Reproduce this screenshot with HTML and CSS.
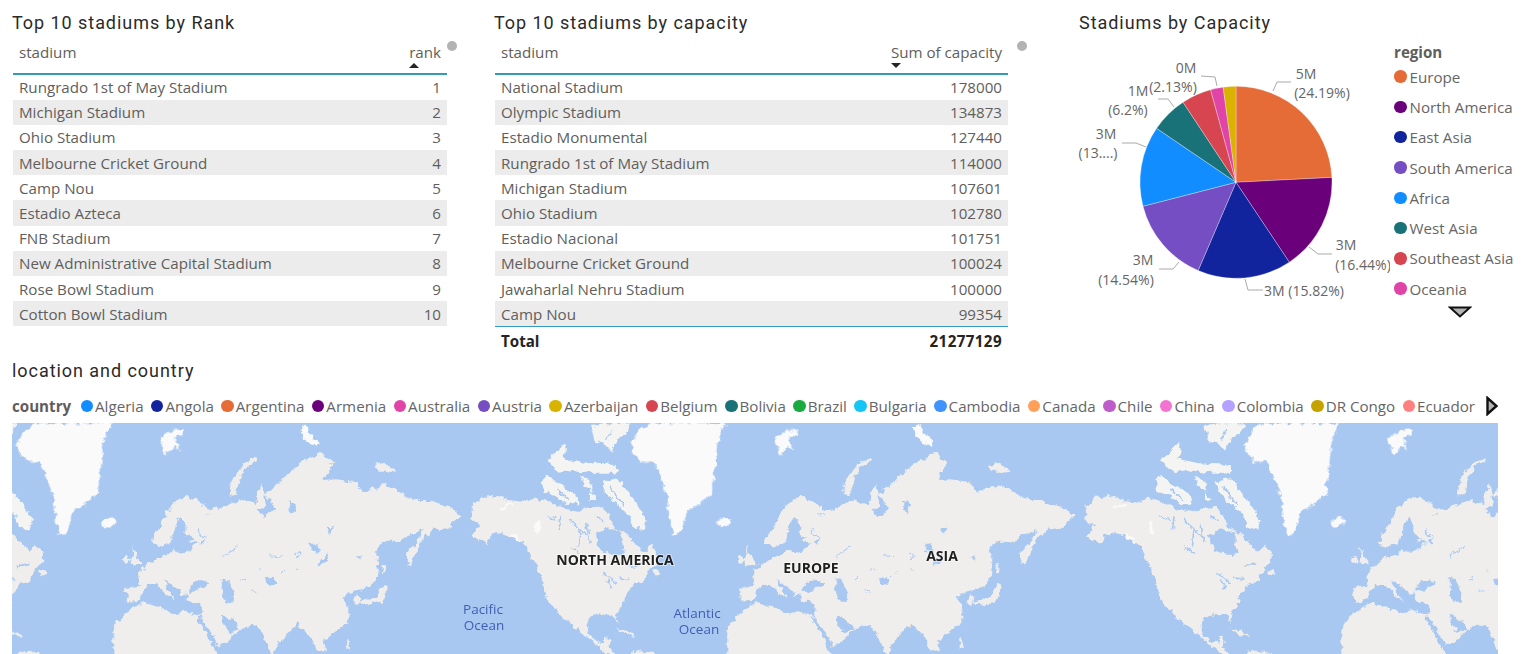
FILE: index.html
```html
<!DOCTYPE html>
<html lang="en">
<head>
<meta charset="utf-8">
<title>Stadiums report</title>
<link rel="stylesheet" href="styles.css">
</head>
<body>
<main class="report">
  <section class="top">
    <div class="visual rank-visual">
      <h2 class="title">Top 10 stadiums by Rank</h2>
      <div class="table-wrap">
        <div class="table rank-table">
          <div class="head"><span>stadium</span><span class="sort sort-up">rank</span></div>
          <div class="row"><span>Rungrado 1st of May Stadium</span><span>1</span></div>
          <div class="row"><span>Michigan Stadium</span><span>2</span></div>
          <div class="row"><span>Ohio Stadium</span><span>3</span></div>
          <div class="row"><span>Melbourne Cricket Ground</span><span>4</span></div>
          <div class="row"><span>Camp Nou</span><span>5</span></div>
          <div class="row"><span>Estadio Azteca</span><span>6</span></div>
          <div class="row"><span>FNB Stadium</span><span>7</span></div>
          <div class="row"><span>New Administrative Capital Stadium</span><span>8</span></div>
          <div class="row"><span>Rose Bowl Stadium</span><span>9</span></div>
          <div class="row"><span>Cotton Bowl Stadium</span><span>10</span></div>
        </div>
        <i class="scroll-dot"></i>
      </div>
    </div>
    <div class="visual capacity-visual">
      <h2 class="title">Top 10 stadiums by capacity</h2>
      <div class="table-wrap">
        <div class="table capacity-table">
          <div class="head"><span>stadium</span><span class="sort sort-down">Sum of capacity</span></div>
          <div class="row"><span>National Stadium</span><span>178000</span></div>
          <div class="row"><span>Olympic Stadium</span><span>134873</span></div>
          <div class="row"><span>Estadio Monumental</span><span>127440</span></div>
          <div class="row"><span>Rungrado 1st of May Stadium</span><span>114000</span></div>
          <div class="row"><span>Michigan Stadium</span><span>107601</span></div>
          <div class="row"><span>Ohio Stadium</span><span>102780</span></div>
          <div class="row"><span>Estadio Nacional</span><span>101751</span></div>
          <div class="row"><span>Melbourne Cricket Ground</span><span>100024</span></div>
          <div class="row"><span>Jawaharlal Nehru Stadium</span><span>100000</span></div>
          <div class="row"><span>Camp Nou</span><span>99354</span></div>
          <div class="total"><span>Total</span><span class="total-value">21277129</span></div>
        </div>
        <i class="scroll-dot"></i>
      </div>
    </div>
    <div class="visual pie-visual">
      <h2 class="title pie-title">Stadiums by Capacity</h2>
      <div class="pie-body">
        <svg class="pie" viewBox="1062 40 328 270" width="328" height="270" aria-label="Pie chart of capacity by region">
          <g class="slices">
            <path fill="#E66C37" d="M1236 182.3V86.3A96 96 0 0 1 1331.88 177.41Z"/>
            <path fill="#6B007B" d="M1236 182.3L1331.88 177.41A96 96 0 0 1 1289.31 262.13Z"/>
            <path fill="#12239E" d="M1236 182.3L1289.31 262.13A96 96 0 0 1 1198.16 270.52Z"/>
            <path fill="#744EC2" d="M1236 182.3L1198.16 270.52A96 96 0 0 1 1143.03 206.24Z"/>
            <path fill="#118DFF" d="M1236 182.3L1143.03 206.24A96 96 0 0 1 1156.6 128.34Z"/>
            <path fill="#197278" d="M1236 182.3L1156.6 128.34A96 96 0 0 1 1183.02 102.25Z"/>
            <path fill="#D64550" d="M1236 182.3L1183.02 102.25A96 96 0 0 1 1210.61 89.72Z"/>
            <path fill="#E044A7" d="M1236 182.3L1210.61 89.72A96 96 0 0 1 1223.19 87.16Z"/>
            <path fill="#D9B300" d="M1236 182.3L1223.19 87.16A96 96 0 0 1 1236 86.3Z"/>
          </g>
          <g class="leaders">
            <path d="M1291 82H1277L1273 91"/>
            <path d="M1201 76L1215 77L1217 86"/>
            <path d="M1158 99H1168L1174 107"/>
            <path d="M1122 143H1136L1146 147"/>
            <path d="M1159 269H1173L1179 262"/>
            <path d="M1263 290H1248L1245 279"/>
            <path d="M1332 254H1318L1309 247"/>
          </g>
          <g class="pie-labels">
            <text x="1306" y="79">5M</text>
            <text x="1322" y="98">(24.19%)</text>
            <text x="1186" y="73">0M</text>
            <text x="1173" y="92">(2.13%)</text>
            <text x="1138" y="96">1M</text>
            <text x="1128" y="115">(6.2%)</text>
            <text x="1106" y="139">3M</text>
            <text x="1098" y="158">(13....)</text>
            <text x="1143" y="265">3M</text>
            <text x="1126" y="285">(14.54%)</text>
            <text x="1304" y="296">3M (15.82%)</text>
            <text x="1346" y="250">3M</text>
            <text x="1363" y="270">(16.44%)</text>
          </g>
        </svg>
        <div class="region-legend">
          <b class="legend-name">region</b>
          <span class="region-item"><i class="dot c-orange"></i>Europe</span>
          <span class="region-item"><i class="dot c-plum"></i>North America</span>
          <span class="region-item"><i class="dot c-navy"></i>East Asia</span>
          <span class="region-item"><i class="dot c-violet"></i>South America</span>
          <span class="region-item"><i class="dot c-blue"></i>Africa</span>
          <span class="region-item"><i class="dot c-teal"></i>West Asia</span>
          <span class="region-item"><i class="dot c-red"></i>Southeast Asia</span>
          <span class="region-item"><i class="dot c-pink"></i>Oceania</span>
          <svg class="legend-arrow" viewBox="0 0 24 12" width="24" height="12"><path d="M2 1.5H22L12 10.5Z"/></svg>
        </div>
      </div>
    </div>
  </section>

  <section class="map-visual">
    <h2 class="title">location and country</h2>
    <div class="country-legend">
      <b class="legend-name">country</b>
      <span class="country"><i class="dot c-blue"></i>Algeria</span>
      <span class="country"><i class="dot c-navy"></i>Angola</span>
      <span class="country"><i class="dot c-orange"></i>Argentina</span>
      <span class="country"><i class="dot c-plum"></i>Armenia</span>
      <span class="country"><i class="dot c-pink"></i>Australia</span>
      <span class="country"><i class="dot c-violet"></i>Austria</span>
      <span class="country"><i class="dot c-yellow"></i>Azerbaijan</span>
      <span class="country"><i class="dot c-red"></i>Belgium</span>
      <span class="country"><i class="dot c-teal"></i>Bolivia</span>
      <span class="country"><i class="dot c-green"></i>Brazil</span>
      <span class="country"><i class="dot c-cyan"></i>Bulgaria</span>
      <span class="country"><i class="dot c-sky"></i>Cambodia</span>
      <span class="country"><i class="dot c-peach"></i>Canada</span>
      <span class="country"><i class="dot c-orchid"></i>Chile</span>
      <span class="country"><i class="dot c-rose"></i>China</span>
      <span class="country"><i class="dot c-lilac"></i>Colombia</span>
      <span class="country"><i class="dot c-olive"></i>DR Congo</span>
      <span class="country"><i class="dot c-salmon"></i>Ecuador</span>
      <svg class="legend-next" viewBox="0 0 12 20" width="12" height="20"><path d="M1.5 2V18L10.5 10Z"/></svg>
    </div>
    <svg class="map" viewBox="12 423 1486 231" width="1486" height="231" aria-label="World map">
      <defs>
        <filter id="soft" x="-2%" y="-4%" width="104%" height="108%" color-interpolation-filters="sRGB">
          <feTurbulence type="fractalNoise" baseFrequency="0.16" numOctaves="3" seed="7" result="noise"/>
          <feDisplacementMap in="SourceGraphic" in2="noise" scale="7" xChannelSelector="R" yChannelSelector="G"/>
          <feGaussianBlur stdDeviation="0.5"/>
        </filter>
        <g id="world">
          <g transform="translate(10 420) scale(.33333)">
            <path class="ice" d="M25,65 L50,25 L80,10 L305,10 L290,40 L280,70 L275,120 L270,170 L262,195 L270,215 L245,235 L225,255 L190,270 L180,305 L170,340 L150,345 L140,320 L135,280 L130,230 L115,190 L100,150 L85,125 L50,125 L30,100 L20,75Z"/>
            <path class="ice" d="M450,55 L490,30 L525,28 L520,45 L495,50 L510,92 L490,80 L470,105 L455,75Z"/>
            <ellipse class="ice" cx="300" cy="306" rx="21" ry="13" transform="rotate(-15 300 306)"/>
            <path class="land" d="M365,375 L375,400 L392,425 L396,436 L370,436 L360,420 L370,405Z"/>
            <ellipse class="land" cx="350" cy="420" rx="8" ry="11"/>
            <path class="land" d="M310,712 L310,625 L330,595 L375,560 L400,548 L455,565 L490,582 L525,572 L565,585 L590,640 L625,712Z"/>
            <path class="land" d="M345,505 L385,498 L390,478 L384,470 L400,442 L440,415 L480,402 L490,390 L520,398 L545,385 L560,370 L585,370 L590,350 L570,345 L555,300 L570,288 L605,285 L625,290 L640,268 L665,250 L700,300 L700,618 L692,628 L650,665 L620,680 L595,640 L565,590 L578,575 L570,548 L530,542 L530,520 L512,525 L505,510 L460,480 L480,520 L492,540 L470,525 L440,495 L415,495 L395,520 L385,543 L352,545Z"/>
            <path class="land" d="M425,372 L430,345 L450,320 L470,280 L495,245 L530,228 L570,245 L595,265 L610,280 L585,285 L565,295 L560,330 L570,350 L590,352 L570,370 L520,360 L500,320 L490,340 L480,370 L455,380Z"/>
            <path class="sea" d="M535,515 L545,490 L570,480 L602,488 L590,500 L572,500 L560,515Z"/>
            <path class="sea" d="M500,300 L515,290 L525,310 L528,345 L550,355 L520,372 L500,360 L492,340Z"/>
            <path class="sea" d="M558,590 L570,590 L625,672 L618,682Z"/>
          </g>
          <g transform="translate(220 420) scale(.33333)">
            <path class="land" d="M30,222 L28,205 L45,165 L75,130 L110,112 L112,122 L80,140 L60,175 L48,225Z"/>
            <path class="ice" d="M240,20 L255,12 L270,40 L298,65 L292,82 L265,70 L245,45Z"/>
            <path class="land" d="M465,135 L490,130 L530,150 L515,155 L475,155Z"/>
            <path class="land" d="M-30,270 L0,265 L40,250 L65,240 L105,255 L112,215 L125,190 L135,225 L150,210 L180,185 L215,150 L240,130 L280,110 L300,95 L340,130 L310,180 L350,178 L400,185 L430,215 L490,195 L530,210 L580,240 L620,240 L660,255 L690,262 L725,290 L700,305 L680,330 L640,322 L630,345 L610,330 L575,340 L540,365 L490,365 L465,395 L475,420 L470,480 L430,510 L385,520 L368,530 L385,565 L385,610 L340,640 L310,660 L318,690 L290,695 L270,650 L230,610 L215,625 L170,680 L160,712 L145,680 L130,645 L110,615 L60,625 L20,608 L5,585 L-30,560Z"/>
            <path class="land" d="M410,520 L425,530 L412,555 L400,550Z"/>
            <path class="land" d="M560,420 L562,395 L585,375 L605,333 L640,322 L610,350 L590,395 L570,437Z"/>
            <path class="land" d="M488,430 L497,440 L495,460 L488,455Z"/>
            <path class="land" d="M492,490 L505,497 L482,548 L440,556 L415,545 L440,540 L470,530Z"/>
            <path class="land" d="M378,655 L385,655 L390,690 L380,680Z"/>
            <path class="sea" d="M5,475 L25,480 L40,520 L38,545 L15,545 L5,510Z"/>
            <path class="sea" d="M5,585 L40,600 L60,625 L30,640 L10,610Z"/>
            <path class="sea" d="M112,270 L135,258 L130,225 L150,240 L165,270 L130,290Z"/>
            <path class="sea" d="M210,240 L230,250 L225,280 L205,270Z"/>
            <path class="sea" d="M320,320 L338,322 L330,345Z"/>
            <path class="sea" d="M268,372 L295,370 L300,400 L275,392Z"/>
            <path class="sea" d="M325,400 L320,425 L295,437 L300,425Z"/>
            <path class="sea" d="M405,412 L425,405 L425,418Z"/>
            <path class="sea" d="M135,475 L165,470 L165,490 L140,495Z"/>
            <g class="specks thin">
              <path d="M5,410 L50,378"/><path d="M150,408 L185,410"/><path d="M225,400 L240,400 L232,418"/>
              <path d="M60,480 L75,475"/><path d="M95,512 L110,520"/><path d="M185,460 L195,450"/><path d="M115,445 L120,455"/>
              <path d="M230,450 L240,452"/>
            </g>
          </g>
          <g transform="translate(430 420) scale(.33333)">
            <path class="land" d="M125,260 L150,235 L190,225 L235,240 L280,245 L320,235 L360,245 L400,265 L440,275 L480,265 L520,262 L560,330 L587,340 L640,395 L662,375 L680,400 L682,430 L660,445 L650,465 L642,485 L612,492 L595,515 L585,525 L582,555 L558,585 L565,612 L548,585 L515,582 L480,590 L470,615 L478,645 L505,668 L525,668 L525,650 L545,660 L535,680 L560,712 L545,712 L505,680 L470,650 L430,620 L395,590 L370,560 L345,530 L340,490 L320,440 L290,380 L255,350 L215,340 L185,345 L170,372 L150,360 L125,350 L150,315 L120,300 L125,285Z"/>
            <ellipse class="land" cx="682" cy="458" rx="12" ry="8"/>
            <path class="arctic" d="M480,15 L530,10 L600,10 L590,40 L560,60 L545,95 L520,70 L495,65Z"/>
            <path class="arctic" d="M350,120 L375,100 L405,70 L412,95 L395,115 L440,125 L470,130 L560,135 L562,158 L490,158 L430,150 L385,158Z"/>
            <path class="arctic" d="M335,185 L350,165 L375,185 L410,205 L440,225 L445,250 L410,255 L375,225 L340,215Z"/>
            <path class="arctic" d="M450,170 L480,180 L490,215 L470,205Z"/>
            <path class="arctic" d="M480,215 L500,240 L480,240Z"/>
            <path class="arctic" d="M515,185 L560,175 L590,215 L620,250 L650,300 L640,330 L610,320 L600,290 L570,260 L530,225Z"/>
            <path class="land" d="M555,625 L590,632 L620,652 L590,645Z"/>
            <path class="land" d="M585,712 L620,690 L660,695 L690,712Z"/>
            <path class="sea" d="M495,345 L530,325 L575,340 L575,380 L590,400 L560,405 L520,395 L500,370Z"/>
            <path class="ice" d="M205,262 L245,247 L250,255 L215,268Z"/>
            <path class="ice" d="M240,340 L265,352 L278,368 L250,358Z"/>
            <path class="ice" d="M315,310 L328,305 L330,340 L318,340Z"/>
            <g class="specks">
              <path d="M345,285 L380,300"/><path d="M390,290 L385,330"/><path d="M420,300 L470,345"/>
              <path d="M450,330 L445,380"/><path d="M470,310 L480,370"/><path d="M520,460 L560,490"/>
              <path d="M570,475 L600,475"/><path d="M530,480 L545,505"/><path d="M600,440 L640,430"/>
              <path d="M500,290 L520,300"/><path d="M420,380 L450,400"/><path d="M540,200 L580,260"/>
              <path d="M500,100 L530,120"/><path d="M545,30 L530,60"/><path d="M380,210 L420,240"/>
            </g>
          </g>
        </g>
      </defs>
      <rect class="ocean" x="12" y="423" width="1486" height="231"/>
      <g filter="url(#soft)">
        <use href="#world" x="-614"/>
        <use href="#world"/>
        <use href="#world" x="614"/>
        <use href="#world" x="1228"/>
      </g>
      <g class="continent-labels">
        <text x="615" y="565">NORTH AMERICA</text>
        <text x="811" y="573">EUROPE</text>
        <text x="942" y="561">ASIA</text>
      </g>
      <g class="ocean-labels">
        <text x="483" y="614">Pacific</text>
        <text x="484" y="630">Ocean</text>
        <text x="697" y="618">Atlantic</text>
        <text x="699" y="634">Ocean</text>
      </g>
    </svg>
  </section>
</main>
</body>
</html>
```

FILE: styles.css
```css
* { box-sizing: border-box; }
html, body { margin: 0; padding: 0; background: #fff; }
body {
  width: 1522px;
  height: 654px;
  overflow: hidden;
  font-family: "Open Sans", "Noto Sans", sans-serif;
  font-size: 15.15px;
  color: #605e5c;
}
.report { display: flex; flex-direction: column; height: 654px; }

.top { display: flex; height: 356px; padding-left: 12px; }
.visual { display: flex; flex-direction: column; }
.rank-visual { width: 482px; }
.capacity-visual { width: 568px; }
.pie-visual { flex: 1; }

.title {
  margin: 0;
  height: 41px;
  padding-top: 11px;
  font-family: Roboto, "Open Sans", sans-serif;
  font-size: 18px;
  line-height: 24px;
  font-weight: 400;
  letter-spacing: 0.95px;
  color: #2b2a29;
}
.pie-title { padding-left: 17px; }

.table-wrap { display: flex; align-items: flex-start; }
.table { margin-left: 1px; color: #605e5c; }
.rank-table { width: 434px; }
.capacity-table { width: 513px; }
.head {
  display: flex;
  justify-content: space-between;
  height: 33.5px;
  padding: 0 6px;
  border-bottom: 2px solid #3599b8;
  line-height: 22px;
}
.row, .total {
  display: flex;
  justify-content: space-between;
  align-items: center;
  height: 25.2px;
  padding: 0 6px;
  white-space: nowrap;
}
.row:nth-child(odd) { background: #ececec; }
.total {
  height: 28px;
  padding-top: 1px;
  border-top: 1px solid #3599b8;
  font-weight: 700;
  color: #252423;
}
.total-value { letter-spacing: 0.4px; }
.sort { position: relative; }
.sort::after {
  content: "";
  position: absolute;
  top: 22px;
  left: 0;
  width: 0;
  height: 0;
  border-left: 5px solid transparent;
  border-right: 5px solid transparent;
}
.sort-up::after { border-bottom: 5px solid #252423; }
.sort-down::after { border-top: 5px solid #252423; }
.scroll-dot {
  flex: none;
  width: 10px;
  height: 10px;
  border-radius: 50%;
  background: #b3b3b3;
}
.capacity-table + .scroll-dot { margin-left: 9px; }

.pie-body { display: flex; margin-top: -1px; }
.pie { flex: none; display: block; }
.slices path { stroke: #fff; stroke-width: 0.3; }
.leaders path { fill: none; stroke: #aaa; stroke-width: 1; }
.pie-labels text {
  font-size: 14px;
  fill: #666;
  text-anchor: middle;
}
.region-legend {
  display: flex;
  flex-direction: column;
  align-items: flex-start;
  margin-left: 4px;
  color: #666;
  white-space: nowrap;
}
.region-legend .legend-name { height: 21.5px; line-height: 24px; }
.legend-name { font-weight: 700; color: #605e5c; }
.region-item {
  display: flex;
  align-items: center;
  gap: 3px;
  height: 30.3px;
}
.legend-arrow {
  margin: 2px 0 0 54px;
  fill: #b3b3b3;
  stroke: #111;
  stroke-width: 2;
}
.dot {
  flex: none;
  width: 12.5px;
  height: 12.5px;
  border-radius: 50%;
}
.c-orange { background: #e66c37; }
.c-plum { background: #6b007b; }
.c-navy { background: #12239e; }
.c-violet { background: #744ec2; }
.c-blue { background: #118dff; }
.c-teal { background: #197278; }
.c-red { background: #d64550; }
.c-pink { background: #e044a7; }
.c-yellow { background: #d9b300; }
.c-green { background: #1aab40; }
.c-cyan { background: #15c6f4; }
.c-sky { background: #4092ff; }
.c-peach { background: #ffa058; }
.c-orchid { background: #be5dc9; }
.c-rose { background: #f472d0; }
.c-lilac { background: #b5a1ff; }
.c-olive { background: #c4a200; }
.c-salmon { background: #ff8080; }

.map-visual { display: flex; flex-direction: column; flex: 1; padding-left: 12px; min-height: 0; }
.map-visual .title { height: 38px; padding-top: 3px; }
.country-legend {
  display: flex;
  align-items: flex-start;
  gap: 7.4px;
  height: 29px;
  padding-top: 1px;
  line-height: 22px;
  white-space: nowrap;
  color: #666;
}
.country-legend .legend-name { margin-right: 2px; }
.country { display: flex; align-items: center; gap: 2px; }
.legend-next {
  margin: 1px 0 0 4px;
  fill: #b3b3b3;
  stroke: #111;
  stroke-width: 2.4;
}
.map { display: block; flex: none; }
.ocean { fill: #a9c8f1; }
.land { fill: #efeeec; }
.arctic { fill: #f4f4f2; }
.ice { fill: #fafafa; }
.sea { fill: #a9c8f1; }
.specks path { fill: none; stroke: #a9c8f1; stroke-width: 5; }
.specks.thin path { stroke-width: 3; }
.continent-labels text {
  font-family: "Open Sans", sans-serif;
  font-size: 14px;
  font-weight: 700;
  fill: #1f1f1f;
  text-anchor: middle;
  paint-order: stroke;
  stroke: rgba(255, 255, 255, .5);
  stroke-width: 2px;
}
.ocean-labels text {
  font-family: "Open Sans", sans-serif;
  font-size: 13.5px;
  fill: #3f5fb5;
  text-anchor: middle;
}
```
